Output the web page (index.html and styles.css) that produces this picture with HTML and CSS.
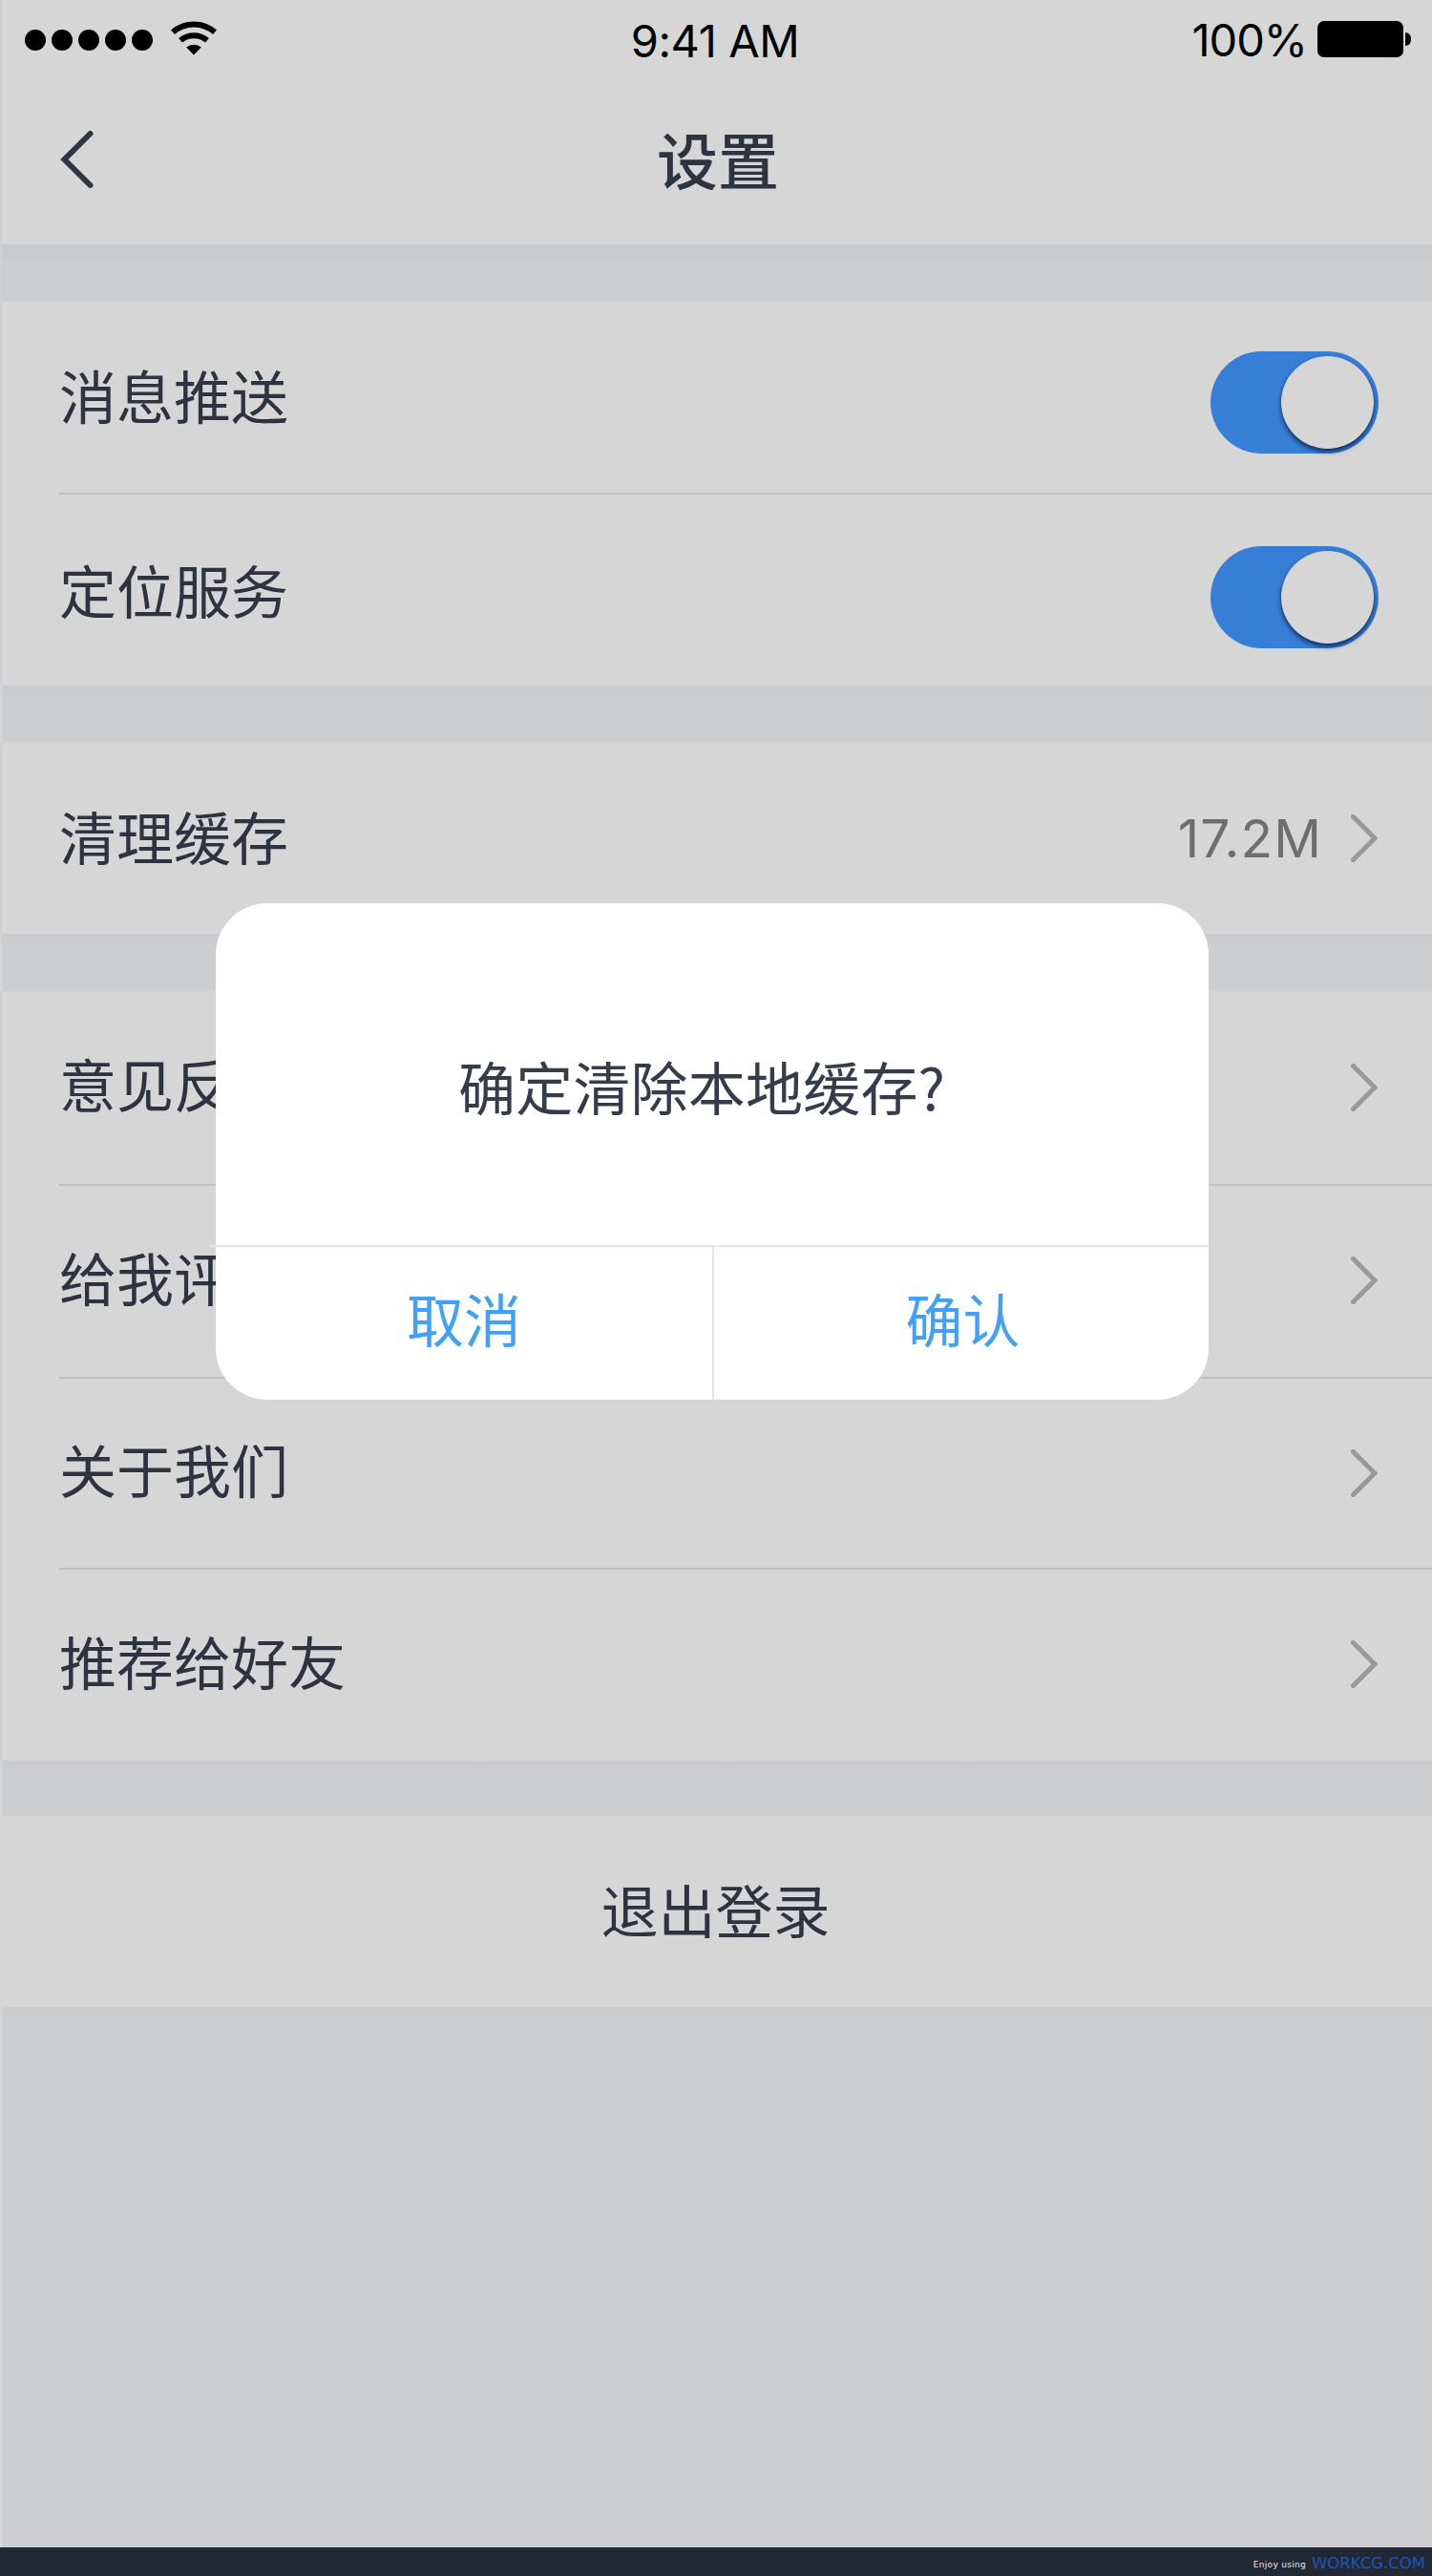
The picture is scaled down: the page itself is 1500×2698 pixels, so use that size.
FILE: index.html
```html
<!DOCTYPE html>
<html lang="zh-CN">
<head>
<meta charset="utf-8">
<title>设置</title>
<link rel="stylesheet" href="styles.css">
</head>
<body>
<svg class="defs" width="0" height="0">
  <symbol id="chevron" viewBox="0 0 28 50"><path d="M2.5 2.5 L25 25 L2.5 47.5"/></symbol>
</svg>
<div class="screen">
  <header class="header">
    <div class="status">
      <div class="status-left">
        <div class="signal"><i></i><i></i><i></i><i></i><i></i></div>
        <svg class="wifi" width="48" height="36" viewBox="0 0 48 36">
          <path d="M2 11.7 A33.5 33.5 0 0 1 46 11.7" fill="none" stroke="#000" stroke-width="6"/>
          <path d="M10 20.3 A22 22 0 0 1 38 20.3" fill="none" stroke="#000" stroke-width="6"/>
          <path d="M16.2 27.6 A12 12 0 0 1 31.8 27.6 L24 35.6 Z"/>
        </svg>
      </div>
      <div class="time">9:41 AM</div>
      <div class="status-right">
        <span class="percent">100%</span>
        <div class="battery"><b></b><i></i></div>
      </div>
    </div>
    <nav class="nav">
      <svg class="back" width="36" height="62" viewBox="0 0 36 62"><path d="M32.5 4 L5.5 31 L32.5 58"/></svg>
      <h1>设置</h1>
    </nav>
  </header>
  <div class="gap gap-top"></div>
  <section class="group">
    <div class="row"><span class="label">消息推送</span><div class="toggle"><i></i></div></div>
    <hr>
    <div class="row low"><span class="label">定位服务</span><div class="toggle"><i></i></div></div>
  </section>
  <div class="gap"></div>
  <section class="group">
    <div class="row"><span class="label">清理缓存</span><span class="value">17.2M</span><svg class="chevron"><use href="#chevron"/></svg></div>
  </section>
  <div class="gap"></div>
  <section class="group links">
    <div class="row tall"><span class="label">意见反馈</span><svg class="chevron"><use href="#chevron"/></svg></div>
    <hr>
    <div class="row"><span class="label">给我评分</span><svg class="chevron"><use href="#chevron"/></svg></div>
    <hr>
    <div class="row short"><span class="label">关于我们</span><svg class="chevron"><use href="#chevron"/></svg></div>
    <hr>
    <div class="row"><span class="label">推荐给好友</span><svg class="chevron"><use href="#chevron"/></svg></div>
  </section>
  <div class="gap gap-small"></div>
  <section class="group logout"><span class="label">退出登录</span></section>
  <div class="gap rest"></div>
  <footer class="footer"><span class="enjoy">Enjoy using</span><span class="brand">WORKCG.COM</span></footer>

  <div class="dialog">
    <p class="message">确定清除本地缓存?</p>
    <div class="actions">
      <button class="cancel">取消</button>
      <button class="confirm">确认</button>
    </div>
  </div>
</div>
</body>
</html>
```
FILE: styles.css
```css
* { box-sizing: border-box; }
body {
  margin: 0;
  font-family: "Noto Sans CJK SC", sans-serif;
  color: #2d333f;
}
.defs { display: block; position: absolute; }
.screen {
  position: relative;
  display: flex;
  flex-direction: column;
  width: 1500px;
  height: 2698px;
  background: #cdced0;
  overflow: hidden;
}
.header {
  height: 256px;
  background: #d6d6d6;
  border-left: 2px solid #cfd0d3;
}
.status {
  display: grid;
  grid-template-columns: 1fr auto 1fr;
  align-items: center;
  height: 84px;
  padding: 0 22px 0 24px;
  font-family: Inter, sans-serif;
  font-size: 47px;
  line-height: 56px;
  color: #000;
}
.status-left { display: flex; align-items: center; gap: 19px; }
.signal { display: flex; gap: 6px; }
.signal i { width: 22px; height: 22px; border-radius: 50%; background: #000; }
.wifi { margin-bottom: 4px; }
.time { padding: 2px 6px 0 0; letter-spacing: -.4px; }
.status-right { display: flex; justify-content: flex-end; align-items: center; gap: 11px; }
.percent { letter-spacing: -1px; }
.battery { display: flex; align-items: center; gap: 2px; margin-bottom: 2px; }
.battery b { width: 90px; height: 38px; border-radius: 7px; background: #000; }
.battery i { width: 6px; height: 14px; border-radius: 0 6px 6px 0; background: #000; }
.nav {
  display: grid;
  grid-template-columns: 36px 1fr 36px;
  align-items: center;
  height: 166px;
  padding: 0 58px 0 60px;
}
.back { fill: none; stroke: #2f3643; stroke-width: 6; stroke-linecap: round; }
h1 { margin: 0; padding-bottom: 5px; text-align: center; font-size: 64px; font-weight: 500; line-height: 90px; }
.gap {
  height: 60px;
  border-left: 2px solid #d6d6d6;
  background: linear-gradient(#c9cbcf 0, #cdced0 10px);
}
.gap-top { background: linear-gradient(#c4c8cb 0, #c9cdd0 14px, #cdced0 19px); border-left-color: #cfd0d3; }
.gap-small { height: 58px; }
.rest { flex: 1; }
.group { background: #d6d6d6; border-left: 2px solid #cfd0d3; }
.row { display: flex; align-items: center; height: 200px; padding: 0 57px 0 60px; }
.tall { height: 202px; }
.short { height: 198px; }
.label { flex: 1; padding-bottom: 6px; font-size: 60px; line-height: 84px; }
.low .label { padding-bottom: 2px; }
.links .label { padding-bottom: 10px; }
hr { height: 2px; margin: 0 0 0 60px; border: 0; background: #c0c0c0; }
.value { margin-right: 30px; font-family: Inter, sans-serif; font-size: 55px; letter-spacing: 1.1px; color: #6d6e70; }
.chevron { width: 28px; height: 50px; fill: none; stroke: #999; stroke-width: 5; stroke-linecap: round; }
.links .row:not(.tall):not(.short) .chevron { margin-bottom: 2px; }
.toggle {
  display: flex;
  justify-content: flex-end;
  width: 176px;
  height: 107px;
  margin: 10px -1px 0 0;
  padding: 5px;
  border-radius: 54px;
  background: #377ed7;
}
.low .toggle { margin-top: 14px; }
.toggle i {
  width: 97px;
  height: 97px;
  border-radius: 50%;
  background: #d6d6d6;
  box-shadow: 0 3px 5px rgba(0, 12, 40, .75);
}
.logout { display: flex; height: 200px; align-items: center; padding-right: 3px; border-left-color: #d6d6d6; text-align: center; }
.footer {
  display: flex;
  justify-content: flex-end;
  align-items: center;
  gap: 6px;
  height: 30px;
  padding: 2px 7px 0 0;
  background: #232835;
  font-family: "DejaVu Sans", sans-serif;
}
.enjoy { padding-top: 4px; font-size: 9px; letter-spacing: .3px; color: #e8eaee; }
.brand { font-size: 16.5px; color: #1b56b4; }
.dialog {
  position: absolute;
  left: 226px;
  top: 946px;
  display: flex;
  flex-direction: column;
  width: 1040px;
  height: 520px;
  border-radius: 54px;
  background: #fff;
}
.message {
  height: 358px;
  margin: 0;
  padding: 149px 0 0 254px;
  font-size: 60px;
  letter-spacing: .2px;
  line-height: 84px;
  color: #353c4a;
}
.actions {
  display: grid;
  grid-template-columns: 522px 1fr;
  height: 162px;
  margin-left: -6px;
  padding-left: 6px;
  border-top: 2px solid #e4e4e4;
}
button {
  border: 0;
  padding: 0 0 13px;
  background: none;
  font: 60px/84px "Noto Sans CJK SC", sans-serif;
  color: #41a1f8;
}
.cancel { border-right: 2px solid #e4e4e4; }
.confirm { padding-left: 3px; }
```
